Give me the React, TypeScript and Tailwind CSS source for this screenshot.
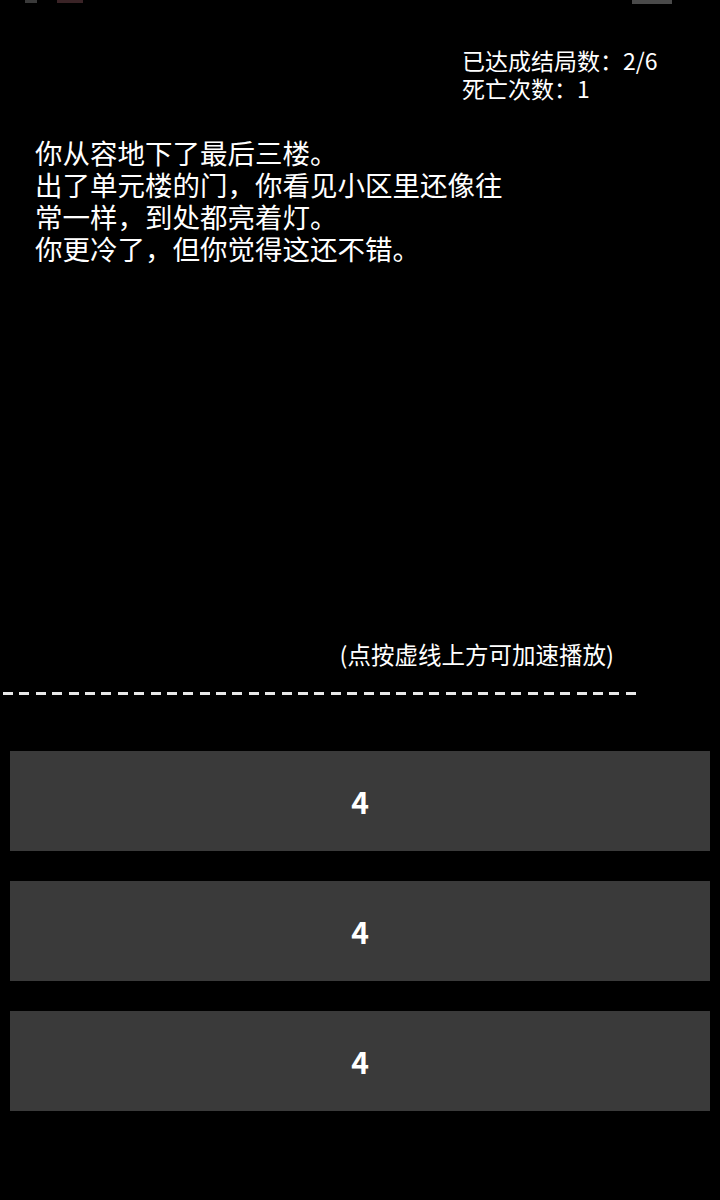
const STORY = [
  '你从容地下了最后三楼。',
  '出了单元楼的门，你看见小区里还像往',
  '常一样，到处都亮着灯。',
  '你更冷了，但你觉得这还不错。',
]

const CHOICES = ['4', '4', '4']

const cjk = 'font-["Noto_Sans_CJK_SC","Noto_Sans",sans-serif]'

export default function App() {
  return (
    <div className={`min-h-[1200px] w-[720px] bg-black text-white ${cjk}`}>
      {/* clipped status bar remnants */}
      <div className="flex h-[4px] items-start">
        <div className="ml-[25px] h-[3px] w-[12px] bg-[#3a3a3a]" />
        <div className="ml-[20px] h-[3px] w-[26px] bg-[#3a2326]" />
        <div className="ml-auto mr-[48px] h-[4px] w-[40px] bg-[#4a4a4a]" />
      </div>

      <div className="mt-[42px] flex justify-end pr-[50px]">
        <div className="w-[208px] text-[23px] leading-[28px]">
          <div>已达成结局数：2/6</div>
          <div>死亡次数：1</div>
        </div>
      </div>

      <div className="mt-[34px] pl-[35px] text-[27.5px] leading-[32px]">
        {STORY.map((line, i) => (
          <div key={i}>{line}</div>
        ))}
      </div>

      <div className="mt-[376px] pr-[106px] text-right text-[23.5px] leading-[28px]">
        (点按虚线上方可加速播放)
      </div>

      <div className="mt-[24px] flex gap-[6.4px] pl-[3px]">
        {Array.from({ length: 39 }).map((_, i) => (
          <div key={i} className="h-[3px] w-[10px] bg-[#e8e8e8]" />
        ))}
      </div>

      <div className="mt-[56px] flex flex-col gap-[30px] px-[10px]">
        {CHOICES.map((c, i) => (
          <button
            key={i}
            className="flex h-[100px] items-center justify-center bg-[#3a3a3a] text-[30px] font-bold text-white"
          >
            {c}
          </button>
        ))}
      </div>
    </div>
  )
}
